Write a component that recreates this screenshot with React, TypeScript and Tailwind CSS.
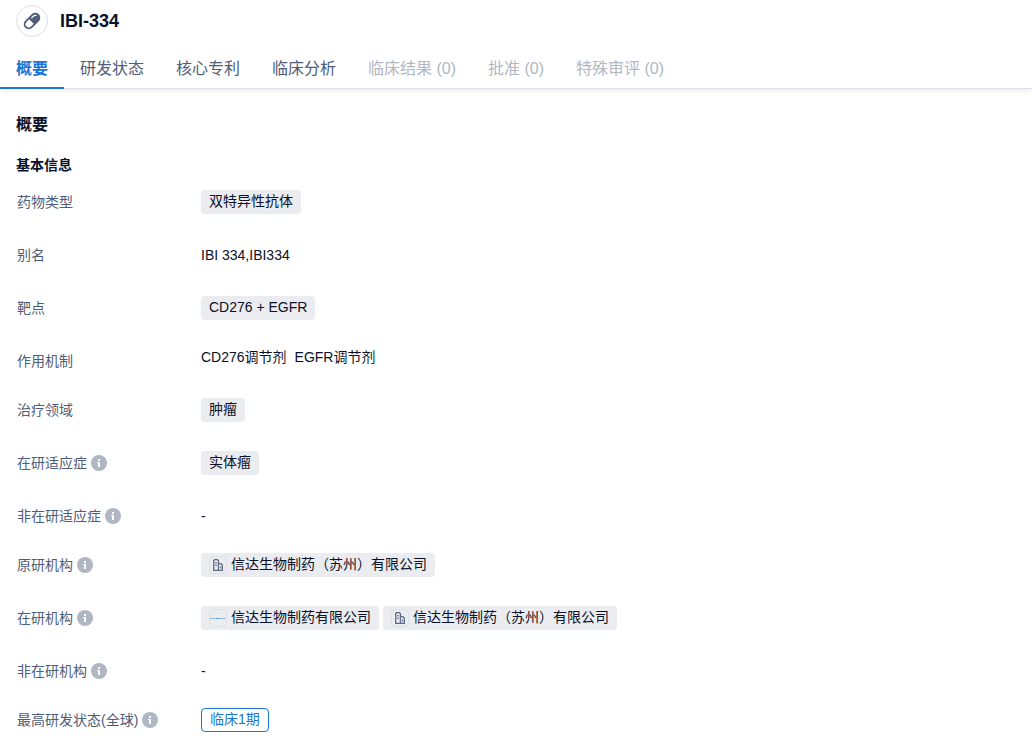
import React from 'react'

const tabs = [
  { label: '概要', active: true },
  { label: '研发状态' },
  { label: '核心专利' },
  { label: '临床分析' },
  { label: '临床结果 (0)', disabled: true },
  { label: '批准 (0)', disabled: true },
  { label: '特殊审评 (0)', disabled: true },
]

function PillIcon() {
  return (
    <svg className="w-5 h-5" viewBox="0 0 20 20" fill="none" aria-hidden="true">
      <g transform="rotate(-45 10 10)">
        <rect x="0.4" y="5" width="19.2" height="10" rx="5" fill="#4e5d78" />
        <path d="M9.2 6.8H5.4a3.2 3.2 0 0 0 0 6.4h3.8z" fill="#fff" />
        <path d="M12 7.5h2.6a2.6 2.6 0 0 1 2.2 1.4" stroke="#fff" strokeWidth="1.2" strokeLinecap="round" />
      </g>
    </svg>
  )
}

function InfoIcon() {
  return (
    <svg className="w-4 h-4" viewBox="0 0 16 16" aria-hidden="true">
      <circle cx="8" cy="8" r="8" fill="#b0b7c3" />
      <path d="M7 4h2v2H7zM6 7h3v5H7V8H6z" fill="#fff" />
    </svg>
  )
}

function BuildingIcon() {
  return (
    <svg className="w-3 h-3" viewBox="0 0 12 12" fill="none" stroke="#5d6b84" aria-hidden="true">
      <path d="M1.7 11.3V1.6L2.6.7h2.8l1 .9v9.7M6.4 4.6h2.4l1.5 1.4v5.3M1 11.3h10" strokeWidth="1.3" />
      <path d="M3 3.8h2M3 6.2h2M8.4 7.5v2" strokeWidth="1" />
    </svg>
  )
}

function CompanyLogo() {
  return (
    <svg className="w-4 h-4" viewBox="0 0 16 16" fill="none" aria-hidden="true">
      <path d="M0 8.5h16" stroke="#c3d3ea" strokeWidth="1" />
      <path d="M0 8.5h5M10 8.5h6" stroke="#8fa6cf" strokeWidth="1" strokeDasharray="2 1" />
      <path d="M6 8.5h3" stroke="#4aa3d8" strokeWidth="1" />
    </svg>
  )
}

function Tag({ children }: { children: React.ReactNode }) {
  return (
    <span className="inline-flex h-6 items-center rounded bg-[#ebecf0] px-2 pb-0.5">{children}</span>
  )
}

function OrgTag({ name, logo }: { name: string; logo?: React.ReactNode }) {
  return (
    <a href="#" className="inline-flex h-6 items-center gap-1 rounded bg-[#ebecf0] px-2">
      <span className="flex h-[18px] w-[18px] items-center justify-center rounded border border-[#dfe1e8]">
        {logo ?? <BuildingIcon />}
      </span>
      <span className="pb-0.5">{name}</span>
    </a>
  )
}

interface RowProps {
  label: string
  info?: boolean
  compact?: boolean
  children: React.ReactNode
}

function Row({ label, info, compact, children }: RowProps) {
  return (
    <div className={`flex items-start ${compact ? 'pb-[25px]' : 'pb-[29px]'}`}>
      <dt className="flex h-6 w-[184px] shrink-0 items-center gap-1 text-[#4e5d78]">
        {label}
        {info && (
          <button type="button" aria-label={`${label}说明`}>
            <InfoIcon />
          </button>
        )}
      </dt>
      <dd className="flex flex-1 flex-wrap gap-1">{children}</dd>
    </div>
  )
}

export default function App() {
  return (
    <div className="bg-white font-['Liberation_Sans','Noto_Sans_CJK_SC',sans-serif] text-sm text-[#0a1128]">
      {/* Drug header and tabs */}
      <header className="border-b border-[#dfe1e8] pt-[5px] shadow-[0_2px_6px_rgba(0,0,0,0.08)]">
        <div className="flex items-center gap-3 px-4">
          <div className="flex h-8 w-8 items-center justify-center rounded-full border border-[#dfe1e8]">
            <PillIcon />
          </div>
          <h1 className="text-lg leading-8 font-bold">IBI-334</h1>
        </div>
        <div role="tablist" className="-mb-px mt-3 flex text-base">
          {tabs.map((tab) => (
            <button
              key={tab.label}
              type="button"
              role="tab"
              aria-selected={!!tab.active}
              disabled={tab.disabled}
              className={`h-10 whitespace-nowrap border-b-2 px-4 pt-0.5 ${
                tab.active
                  ? 'border-[#1976d2] font-bold text-[#1976d2]'
                  : tab.disabled
                    ? 'border-transparent text-[#b0b7c3]'
                    : 'border-transparent text-[#4e5d78]'
              }`}
            >
              {tab.label}
            </button>
          ))}
        </div>
      </header>

      {/* Overview */}
      <main className="pt-6">
        <h2 className="px-4 text-base font-bold">概要</h2>
        <h3 className="mt-[18px] px-4 font-bold">基本信息</h3>
        <dl className="mt-[15px] px-[17px]">
          <Row label="药物类型">
            <Tag>双特异性抗体</Tag>
          </Row>
          <Row label="别名">
            <span className="leading-6">IBI 334,IBI334</span>
          </Row>
          <Row label="靶点">
            <Tag>CD276 + EGFR</Tag>
          </Row>
          <Row label="作用机制" compact>
            <span className="mr-1 leading-4">CD276调节剂</span>
            <span className="leading-4">EGFR调节剂</span>
          </Row>
          <Row label="治疗领域">
            <Tag>肿瘤</Tag>
          </Row>
          <Row label="在研适应症" info>
            <Tag>实体瘤</Tag>
          </Row>
          <Row label="非在研适应症" info compact>
            <span className="leading-6">-</span>
          </Row>
          <Row label="原研机构" info>
            <OrgTag name="信达生物制药（苏州）有限公司" />
          </Row>
          <Row label="在研机构" info>
            <OrgTag name="信达生物制药有限公司" logo={<CompanyLogo />} />
            <OrgTag name="信达生物制药（苏州）有限公司" />
          </Row>
          <Row label="非在研机构" info compact>
            <span className="leading-6">-</span>
          </Row>
          <Row label="最高研发状态(全球)" info compact>
            <span className="inline-flex h-6 items-center rounded border border-[#1976d2] px-2 pb-0.5 text-[#1976d2]">
              临床1期
            </span>
          </Row>
        </dl>
      </main>
    </div>
  )
}
